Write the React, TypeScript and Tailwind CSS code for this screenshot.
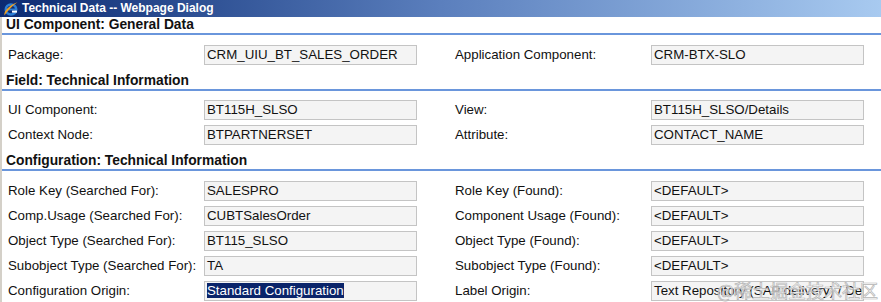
const FONT = "font-['Liberation_Sans',Arial,sans-serif]";

type TField = { label: string; value: string; highlight?: boolean };

function Field({ label, value, highlight }: TField) {
  return (
    <>
      <div className="w-[196px] shrink-0 leading-[20px] text-[13.3px] text-[#111]">
        {label}
      </div>
      <div className="w-[213px] h-[20px] shrink-0 overflow-hidden whitespace-nowrap border border-[#c4c4c4] bg-[#f4f4f4] pl-[2px] text-[13.3px] leading-[18px] text-[#111]">
        {highlight ? (
          <span className="bg-[#0a246a] text-white">{value}</span>
        ) : (
          value
        )}
      </div>
    </>
  );
}

function Row({ left, right }: { left: TField; right: TField }) {
  return (
    <div className="flex h-[25px] items-start pl-[6px]">
      <Field {...left} />
      <div className="w-[38px] shrink-0" />
      <div className="flex">
        <Field {...right} />
      </div>
    </div>
  );
}

function SectionHeader({ title }: { title: string }) {
  return (
    <div className="h-[18px] border-b-2 border-[#6a96dc] pl-[4px] text-[13.8px] font-bold leading-[16px] text-[#111]">
      {title}
    </div>
  );
}

function IeIcon() {
  return (
    <svg width="16" height="16" viewBox="0 0 16 16">
      <ellipse cx="8" cy="8.5" rx="5.2" ry="5" fill="none" stroke="#2d7fd6" strokeWidth="2.6" />
      <rect x="3.5" y="7.6" width="9" height="1.8" fill="#2d7fd6" />
      <rect x="9" y="9.6" width="5" height="2" fill="#fff" />
      <path d="M1.5 14.5 C 0 10, 8 3, 14.5 1.2 C 11 3.5, 5 9, 1.5 14.5 Z" fill="#f0a020" />
    </svg>
  );
}

export default function App() {
  return (
    <div className={`${FONT} relative w-[881px] h-[302px] overflow-hidden bg-white`}>
      <div className="flex h-[17px] items-center gap-[3px] bg-gradient-to-r from-[#0c2a72] via-[#5b7fbd] to-[#a8caf0] pl-[3px]">
        <IeIcon />
        <span className="text-[12px] font-bold leading-[17px] text-white">
          Technical Data -- Webpage Dialog
        </span>
      </div>

      <div className="h-[285px] border-l-2 border-[#d4d0c8]">
        <SectionHeader title="UI Component: General Data" />
        <div className="pt-[10px] pb-[3px]">
          <Row
            left={{ label: "Package:", value: "CRM_UIU_BT_SALES_ORDER" }}
            right={{ label: "Application Component:", value: "CRM-BTX-SLO" }}
          />
        </div>

        <SectionHeader title="Field: Technical Information" />
        <div className="pt-[9px] pb-[3px]">
          <Row
            left={{ label: "UI Component:", value: "BT115H_SLSO" }}
            right={{ label: "View:", value: "BT115H_SLSO/Details" }}
          />
          <Row
            left={{ label: "Context Node:", value: "BTPARTNERSET" }}
            right={{ label: "Attribute:", value: "CONTACT_NAME" }}
          />
        </div>

        <SectionHeader title="Configuration: Technical Information" />
        <div className="pt-[10px]">
          <Row
            left={{ label: "Role Key (Searched For):", value: "SALESPRO" }}
            right={{ label: "Role Key (Found):", value: "<DEFAULT>" }}
          />
          <Row
            left={{ label: "Comp.Usage (Searched For):", value: "CUBTSalesOrder" }}
            right={{ label: "Component Usage (Found):", value: "<DEFAULT>" }}
          />
          <Row
            left={{ label: "Object Type (Searched For):", value: "BT115_SLSO" }}
            right={{ label: "Object Type (Found):", value: "<DEFAULT>" }}
          />
          <Row
            left={{ label: "Subobject Type (Searched For):", value: "TA" }}
            right={{ label: "Subobject Type (Found):", value: "<DEFAULT>" }}
          />
          <Row
            left={{ label: "Configuration Origin:", value: "Standard Configuration", highlight: true }}
            right={{ label: "Label Origin:", value: "Text Repository (SAP delivery) / Default Label" }}
          />
        </div>
      </div>

      {/* watermark */}
      <div className="pointer-events-none absolute right-[3px] bottom-[1px] font-['Noto_Sans_CJK_SC',sans-serif] text-[18px] leading-[22px] text-white/70 [-webkit-text-stroke:0.7px_#b4b4b4]">
        @稀土掘金技术社区
      </div>
    </div>
  );
}
